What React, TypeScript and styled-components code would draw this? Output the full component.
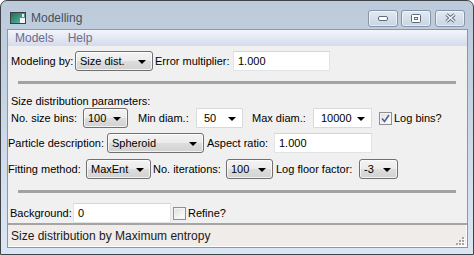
import styled, { createGlobalStyle } from "styled-components";

const GlobalStyle = createGlobalStyle`
  html, body {
    margin: 0;
    padding: 0;
    background: #ffffff;
  }
  * {
    box-sizing: border-box;
  }
`;

const App = () => {
  return (
    <>
      <GlobalStyle />
      <WindowStyled>
        <TitleBarStyled>
          <AppIcon />
          <TitleStyled>Modelling</TitleStyled>
          <CaptionButtonsStyled>
            <CaptionButtonStyled>
              <svg width="10" height="5" viewBox="0 0 10 5">
                <rect x="0.5" y="0.5" width="9" height="4" rx="1.5" fill="#fff" stroke="#5d6b7f" />
              </svg>
            </CaptionButtonStyled>
            <CaptionButtonStyled>
              <svg width="10" height="9" viewBox="0 0 10 9">
                <rect x="0.5" y="0.5" width="9" height="8" rx="1" fill="#fff" stroke="#5d6b7f" />
                <rect x="3.5" y="3.5" width="3" height="2" fill="none" stroke="#5d6b7f" />
              </svg>
            </CaptionButtonStyled>
            <CaptionButtonStyled $close>
              <svg width="11" height="10" viewBox="0 0 11 10">
                <path d="M1.5 1.5 L9.5 8.5 M9.5 1.5 L1.5 8.5" stroke="#5d6b7f" strokeWidth="3.4" />
                <path d="M1.5 1.5 L9.5 8.5 M9.5 1.5 L1.5 8.5" stroke="#f4f6f9" strokeWidth="1.5" />
              </svg>
            </CaptionButtonStyled>
          </CaptionButtonsStyled>
        </TitleBarStyled>
        <ClientStyled>
          <MenuBarStyled>
            <MenuItemStyled>Models</MenuItemStyled>
            <MenuItemStyled>Help</MenuItemStyled>
          </MenuBarStyled>
          <PanelStyled>
            <RowStyled $mt={5}>
              <FieldStyled $ml={3}>
                <LabelStyled $w={64}>Modeling by:</LabelStyled>
                <Combo $w={78} value="Size dist." />
              </FieldStyled>
              <FieldStyled $ml={2}>
                <LabelStyled $w={78}>Error multiplier:</LabelStyled>
                <TextBoxStyled $w={97}>1.000</TextBoxStyled>
              </FieldStyled>
            </RowStyled>

            <SeparatorStyled $mt={10} />

            <HeadingStyled>Size distribution parameters:</HeadingStyled>
            <RowStyled $mt={0}>
              <FieldStyled $ml={3}>
                <LabelStyled $w={72}>No. size bins:</LabelStyled>
                <Combo $w={45} value="100" />
              </FieldStyled>
              <FieldStyled $ml={10}>
                <LabelStyled $w={58}>Min diam.:</LabelStyled>
                <Combo $w={47} value="50" $plain />
              </FieldStyled>
              <FieldStyled $ml={9}>
                <LabelStyled $w={61}>Max diam.:</LabelStyled>
                <Combo $w={59} value="10000" $plain />
              </FieldStyled>
              <FieldStyled $ml={7}>
                <CheckBox checked />
                <CheckLabelStyled>Log bins?</CheckLabelStyled>
              </FieldStyled>
            </RowStyled>

            <RowStyled $mt={5}>
              <FieldStyled $ml={0}>
                <LabelStyled $w={99}>Particle description:</LabelStyled>
                <Combo $w={97} value="Spheroid" />
              </FieldStyled>
              <FieldStyled $ml={3}>
                <LabelStyled $w={67}>Aspect ratio:</LabelStyled>
                <TextBoxStyled $w={98}>1.000</TextBoxStyled>
              </FieldStyled>
            </RowStyled>

            <RowStyled $mt={6}>
              <FieldStyled $ml={0}>
                <LabelStyled $w={78}>Fitting method:</LabelStyled>
                <Combo $w={65} value="MaxEnt" />
              </FieldStyled>
              <FieldStyled $ml={2}>
                <LabelStyled $w={73}>No. iterations:</LabelStyled>
                <Combo $w={47} value="100" />
              </FieldStyled>
              <FieldStyled $ml={3}>
                <LabelStyled $w={83}>Log floor factor:</LabelStyled>
                <Combo $w={39} value="-3" />
              </FieldStyled>
            </RowStyled>

            <SeparatorStyled $mt={11} />

            <RowStyled $mt={10}>
              <FieldStyled $ml={2}>
                <LabelStyled $w={63}>Background:</LabelStyled>
                <TextBoxStyled $w={98}>0</TextBoxStyled>
              </FieldStyled>
              <FieldStyled $ml={2}>
                <CheckBox checked={false} />
                <CheckLabelStyled>Refine?</CheckLabelStyled>
              </FieldStyled>
            </RowStyled>
          </PanelStyled>
          <StatusBarStyled>
            <StatusTextStyled>Size distribution by Maximum entropy</StatusTextStyled>
            <GripStyled>
              <svg width="10" height="10" viewBox="0 0 10 10">
                {[
                  [7, 1],
                  [4, 4],
                  [7, 4],
                  [1, 7],
                  [4, 7],
                  [7, 7],
                ].map(([x, y]) => (
                  <g key={`${x}-${y}`}>
                    <rect x={x + 1} y={y + 1} width="2" height="2" fill="#ffffff" />
                    <rect x={x} y={y} width="2" height="2" fill="#a7a4a2" />
                  </g>
                ))}
              </svg>
            </GripStyled>
          </StatusBarStyled>
        </ClientStyled>
      </WindowStyled>
    </>
  );
};

export default App;

const AppIcon = () => (
  <svg width="16" height="12" viewBox="0 0 16 12">
    <defs>
      <linearGradient id="appicon" x1="0" y1="0" x2="1" y2="1">
        <stop offset="0" stopColor="#1f6b4a" />
        <stop offset="0.55" stopColor="#3e9a86" />
        <stop offset="1" stopColor="#7dbde0" />
      </linearGradient>
    </defs>
    <rect x="0.5" y="0.5" width="15" height="11" fill="url(#appicon)" stroke="#3b3f45" />
    <rect x="10" y="6" width="5" height="5" fill="#f4f6f8" />
    <rect x="12" y="2" width="2" height="3" fill="#e8eef3" />
  </svg>
);

const Combo = ({ $w, value, $plain }: { $w: number; value: string; $plain?: boolean }) => (
  <ComboStyled $w={$w} $plain={$plain}>
    <span>{value}</span>
    <ArrowStyled />
  </ComboStyled>
);

const CheckBox = ({ checked }: { checked: boolean }) => (
  <CheckBoxStyled>
    {checked && (
      <svg width="9" height="9" viewBox="0 0 9 9">
        <path d="M1 4.5 L3.5 7.5 L8 1" fill="none" stroke="#4e6395" strokeWidth="1.6" />
      </svg>
    )}
  </CheckBoxStyled>
);

const WindowStyled = styled.div`
  width: 474px;
  height: 255px;
  display: flex;
  flex-direction: column;
  border: 1px solid #3f4348;
  border-radius: 7px 7px 0 0;
  background: linear-gradient(#bccada 0%, #c4d3e3 35%, #d6e2f0 80%, #dbe6f4 100%);
  padding: 0 5px 6px 6px;
  font-family: "Liberation Sans", Arial, sans-serif;
`;

const TitleBarStyled = styled.div`
  height: 28px;
  display: flex;
  align-items: center;
  padding: 6px 3px 0 3px;
`;

const TitleStyled = styled.div`
  margin-left: 5px;
  font-size: 12px;
  color: #46505c;
  flex: 1;
`;

const CaptionButtonsStyled = styled.div`
  display: flex;
  gap: 3px;
`;

const CaptionButtonStyled = styled.div<{ $close?: boolean }>`
  width: 30px;
  height: 17px;
  margin-left: ${({ $close }) => ($close ? "1px" : "0")};
  display: flex;
  align-items: center;
  justify-content: center;
  border: 1px solid #8695a9;
  border-radius: 3px;
  background: linear-gradient(#e2e9f1 0%, #d6dfea 50%, #c9d5e2 100%);
  box-shadow: inset 0 0 0 1px rgba(255, 255, 255, 0.55);
`;

const ClientStyled = styled.div`
  flex: 1;
  display: flex;
  flex-direction: column;
  border: 1px solid #8898ab;
  background: #f0f0f0;
  min-height: 0;
`;

const MenuBarStyled = styled.div`
  height: 16px;
  display: flex;
  align-items: center;
  background: linear-gradient(#f3f5fb 0%, #e4e8f4 50%, #d6dbed 100%);
`;

const MenuItemStyled = styled.div`
  padding: 0 7px;
  font-size: 12px;
  line-height: 16px;
  color: #6c6c88;
`;

const PanelStyled = styled.div`
  flex: 1;
  display: flex;
  flex-direction: column;
  font-size: 11px;
  color: #000000;
`;

const RowStyled = styled.div<{ $mt: number }>`
  height: 20px;
  margin-top: ${({ $mt }) => $mt}px;
  display: flex;
  align-items: center;
`;

const FieldStyled = styled.div<{ $ml: number }>`
  display: flex;
  align-items: center;
  margin-left: ${({ $ml }) => $ml}px;
`;

const LabelStyled = styled.span<{ $w: number }>`
  width: ${({ $w }) => $w}px;
  flex-shrink: 0;
  white-space: nowrap;
`;

const CheckLabelStyled = styled.span`
  margin-left: 2px;
  white-space: nowrap;
`;

const ComboStyled = styled.div<{ $w: number; $plain?: boolean }>`
  width: ${({ $w }) => $w}px;
  height: 20px;
  flex-shrink: 0;
  display: flex;
  align-items: center;
  justify-content: space-between;
  padding: 0 6px 0 ${({ $plain }) => ($plain ? 7 : 4)}px;
  border: 1px solid ${({ $plain }) => ($plain ? "#dadada" : "#707070")};
  border-radius: ${({ $plain }) => ($plain ? 1 : 3)}px;
  background: ${({ $plain }) =>
    $plain
      ? "#ffffff"
      : "linear-gradient(#f3f3f3 0%, #ebebeb 50%, #dddddd 51%, #d2d2d2 100%)"};
  box-shadow: ${({ $plain }) =>
    $plain ? "none" : "inset 0 0 0 1px rgba(255, 255, 255, 0.7)"};
  white-space: nowrap;
`;

const ArrowStyled = styled.span`
  width: 0;
  height: 0;
  border-left: 4px solid transparent;
  border-right: 4px solid transparent;
  border-top: 4px solid #000000;
  margin-top: 1px;
`;

const TextBoxStyled = styled.div<{ $w: number }>`
  width: ${({ $w }) => $w}px;
  height: 20px;
  flex-shrink: 0;
  display: flex;
  align-items: center;
  padding: 0 4px;
  background: #ffffff;
  border: 1px solid #e2e3e6;
  border-top-color: #d3d5da;
`;

const CheckBoxStyled = styled.span`
  width: 13px;
  height: 13px;
  flex-shrink: 0;
  display: flex;
  align-items: center;
  justify-content: center;
  border: 1px solid #8e8f8f;
  background: linear-gradient(135deg, #dcdcdc 0%, #f4f4f4 60%, #ffffff 100%);
  box-shadow: inset 0 0 0 1px #f4f4f4;
`;

const SeparatorStyled = styled.div<{ $mt: number }>`
  height: 3px;
  margin: ${({ $mt }) => $mt}px 11px 0 10px;
  background: #a3a3a3;
`;

const HeadingStyled = styled.div`
  height: 13px;
  line-height: 13px;
  margin-top: 11px;
  padding-left: 3px;
`;

const StatusBarStyled = styled.div`
  height: 24px;
  display: flex;
  align-items: center;
  border-top: 2px solid #a5a5a5;
  background: #f0ecea;
  box-shadow: inset -1px -1px 0 #ffffff;
  padding: 0 2px 0 3px;
`;

const StatusTextStyled = styled.span`
  font-size: 12px;
  color: #1a1a1a;
  flex: 1;
`;

const GripStyled = styled.span`
  align-self: flex-end;
  display: flex;
  margin-bottom: 1px;
`;
